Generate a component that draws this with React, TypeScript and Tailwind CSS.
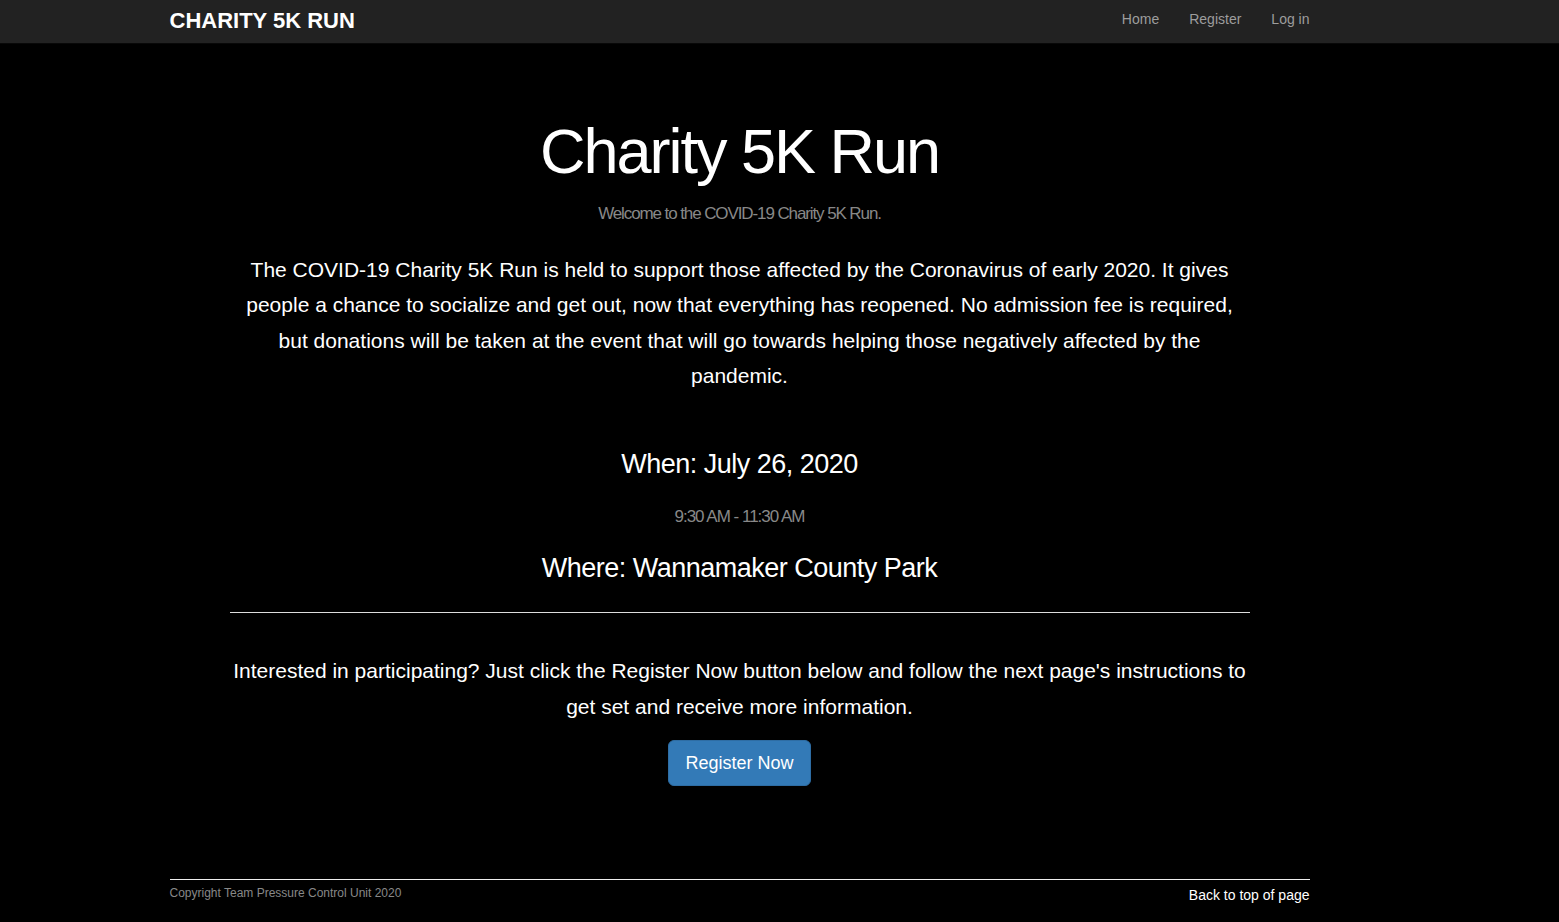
export default function App() {
  return (
    <div className="min-h-screen bg-black font-['Liberation_Sans',Arial,sans-serif] text-white">
      <nav className="h-[44px] border-b border-[#080808] bg-[#222]">
        <div className="w-[1479px]">
          <div className="mx-auto flex h-[43px] w-[1140px] items-center justify-between pb-[5px]">
            <a href="#" className="mt-[4px] text-[22px] font-bold leading-none text-white">
              CHARITY 5K RUN
            </a>
            <ul className="-mr-[15px] flex text-[14px] text-[#9d9d9d]">
              <li className="px-[15px]">Home</li>
              <li className="px-[15px]">Register</li>
              <li className="px-[15px]">Log in</li>
            </ul>
          </div>
        </div>
      </nav>

      <div className="w-[1479px]">
        <main className="mx-auto w-[1020px] text-center">
          <h1 className="mt-[73px] text-[63px] leading-[1.1] tracking-[-2px]">Charity 5K Run</h1>
          <p className="mt-[15px] text-[17px] tracking-[-1.1px] text-[#888]">Welcome to the COVID-19 Charity 5K Run.</p>
          <p className="mx-auto mt-[25px] w-[1000px] text-[21px] leading-[35.5px]">
            The COVID-19 Charity 5K Run is held to support those affected by the Coronavirus of early 2020. It gives
            people a chance to socialize and get out, now that everything has reopened. No admission fee is required,
            but donations will be taken at the event that will go towards helping those negatively affected by the
            pandemic.
          </p>
          <h2 className="mt-[50px] text-[27px] tracking-[-0.5px]">When: July 26, 2020</h2>
          <p className="mt-[20px] text-[17px] tracking-[-1px] text-[#888]">9:30 AM - 11:30 AM</p>
          <h2 className="mt-[18px] text-[27px] tracking-[-0.5px]">Where: Wannamaker County Park</h2>
          <hr className="mt-[24px] border-t border-[#ddd]" />
          <p className="mt-[40px] text-[21px] leading-[36px]">
            Interested in participating? Just click the Register Now button below and follow the next page's
            instructions to get set and receive more information.
          </p>
          <button className="mt-[15px] rounded-[6px] border border-[#2e6da4] bg-[#337ab7] px-[16px] py-[10px] text-[18px] leading-[24px] text-white">
            Register Now
          </button>
        </main>

        <footer className="mx-auto mt-[93px] w-[1140px] border-t border-[#eee] pt-[4px]">
          <div className="flex items-start justify-between">
            <p className="text-[12px] text-[#888]">Copyright Team Pressure Control Unit 2020</p>
            <a href="#top" className="mt-[1px] text-[14px] text-white">
              Back to top of page
            </a>
          </div>
        </footer>
      </div>
    </div>
  );
}
